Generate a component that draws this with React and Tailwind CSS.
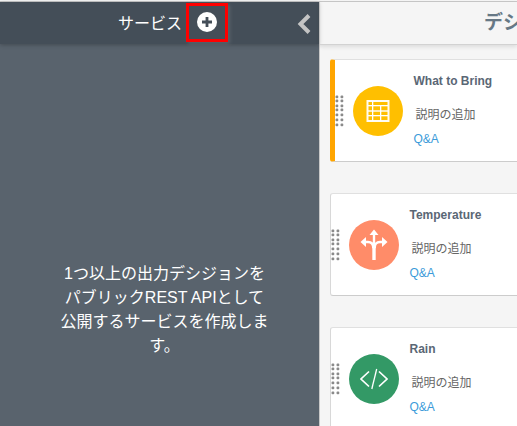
const FONT = "font-['Liberation_Sans','Noto_Sans_CJK_JP',sans-serif]";

function TableIcon() {
  return (
    <svg width="24" height="22" viewBox="0 0 24 22" fill="none">
      <rect x="1.5" y="1" width="21" height="20" stroke="#fff" strokeWidth="2" opacity=".95" />
      <rect x="2" y="5" width="20" height="1.3" fill="#fff" />
      <rect x="2" y="10" width="20" height="2" fill="#fff" opacity=".7" />
      <rect x="2" y="15" width="20" height="1.3" fill="#fff" />
      <rect x="6" y="1" width="1.3" height="20" fill="#fff" />
      <rect x="14" y="6" width="1.3" height="15" fill="#fff" />
    </svg>
  );
}

function BranchIcon() {
  return (
    <svg width="28" height="32" viewBox="0 0 28 32" fill="none">
      <path d="M14 17V31" stroke="#fff" strokeWidth="3.4" />
      <path d="M14 4V20" stroke="#fff" strokeWidth="2.4" />
      <path d="M4 13H8C11.5 13 13.3 15 13.3 19M24 13H20C16.5 13 14.7 15 14.7 19" stroke="#fff" strokeWidth="2.4" />
      <path d="M14 0.5L18.5 6H9.5ZM0.5 13L6 8V18ZM27.5 13L22 8V18Z" fill="#fff" />
    </svg>
  );
}

function CodeIcon() {
  return (
    <svg width="28" height="22" viewBox="0 0 28 22" fill="none" stroke="#fff">
      <path d="M9 3.5L1 11L9 18.5M19 3.5L27 11L19 18.5" strokeWidth="1.7" />
      <path d="M16.7 1L11.8 21" strokeWidth="1.3" />
    </svg>
  );
}

function DragHandle() {
  return (
    <svg className="shrink-0" width="9" height="32" viewBox="0 0 9 32" fill="#8a8a8a">
      {[0, 4, 9, 13, 18, 23, 28].map((y) => (
        <g key={y}>
          <rect x="0.5" y={y + 0.5} width="2.8" height="2.8" rx="1" />
          <rect x="5.5" y={y + 0.5} width="2.8" height="2.8" rx="1" />
        </g>
      ))}
    </svg>
  );
}

function DecisionCard({ title, icon, color, selected }) {
  return (
    <div
      className={
        "flex h-[103px] w-[220px] items-center rounded-[3px] border border-[#e0e0e0] border-b-[#cccccc] bg-white " +
        (selected ? "border-l-[5px] border-l-[#ffa500]" : "border-l-[#d8d8d8]")
      }
    >
      <DragHandle />
      <div className={"ml-[9px] flex size-[50px] shrink-0 items-center justify-center rounded-full " + color}>
        {icon}
      </div>
      <div className="ml-[10.5px] h-full whitespace-nowrap pt-[13px] text-[12px]">
        <div className="h-4 font-bold leading-4 text-[#5a6775]">{title}</div>
        <div className="mt-[18px] h-4 pl-[2px] leading-4 text-[#666666]">説明の追加</div>
        <div className="mt-2 h-4 leading-4 text-[#3b9bd9]">Q&amp;A</div>
      </div>
    </div>
  );
}

export default function App() {
  return (
    <div className={"flex h-[426px] w-[517px] flex-col overflow-hidden bg-[#f5f5f5] " + FONT}>
      <div className="h-[2px] shrink-0 border-b border-[#c8c8c8]" />
      <div className="flex min-h-0 flex-1">
        <aside className="flex w-[319px] shrink-0 flex-col bg-[#59636d]">
          <header className="flex h-[42px] shrink-0 items-center bg-[#444e58] pl-[118px] shadow-[0_1px_4px_rgba(0,0,0,0.25)]">
            <span className="w-[68px] whitespace-nowrap pt-px text-[16px] leading-6 text-white">サービス</span>
            <button className="mb-[2px] flex h-[39px] w-[42px] items-center justify-center border-[3px] border-[#ff0000] shadow-[2px_2px_4px_rgba(255,255,255,0.12)]">
              <svg width="20" height="20" viewBox="0 0 20 20">
                <circle cx="10" cy="10" r="10" fill="#fff" />
                <path d="M10 5V15M5 10H15" stroke="#444e58" strokeWidth="2.8" />
              </svg>
            </button>
            <svg className="ml-[69px] mt-[2px]" width="15" height="22" viewBox="0 0 15 22" fill="none">
              <path d="M12 2.5L3.5 11L12 19.5" stroke="#c4c4c4" strokeWidth="4" />
            </svg>
          </header>
          <p className="mt-[218px] whitespace-nowrap pl-[10px] text-center text-[16px] leading-6 text-white">
            1つ以上の出力デシジョンを
            <br />
            パブリックREST APIとして
            <br />
            公開するサービスを作成しま
            <br />
            す。
          </p>
        </aside>
        <main className="min-w-0 flex-1 border-l border-[#c8c8c8]">
          <header className="flex h-[43px] items-center whitespace-nowrap border-b border-[#d2d2d2] pl-[164px] pt-px text-[19px] font-bold text-[#667885] shadow-[0_2px_4px_rgba(0,0,0,0.1)]">
            デシ
          </header>
          <div className="flex flex-col gap-[31px] pl-[10px] pt-[14px]">
            <DecisionCard title="What to Bring" icon={<TableIcon />} color="bg-[#ffbf00]" selected />
            <DecisionCard title="Temperature" icon={<BranchIcon />} color="bg-[#ff8c69]" />
            <DecisionCard title="Rain" icon={<CodeIcon />} color="bg-[#339966]" />
          </div>
        </main>
      </div>
    </div>
  );
}
